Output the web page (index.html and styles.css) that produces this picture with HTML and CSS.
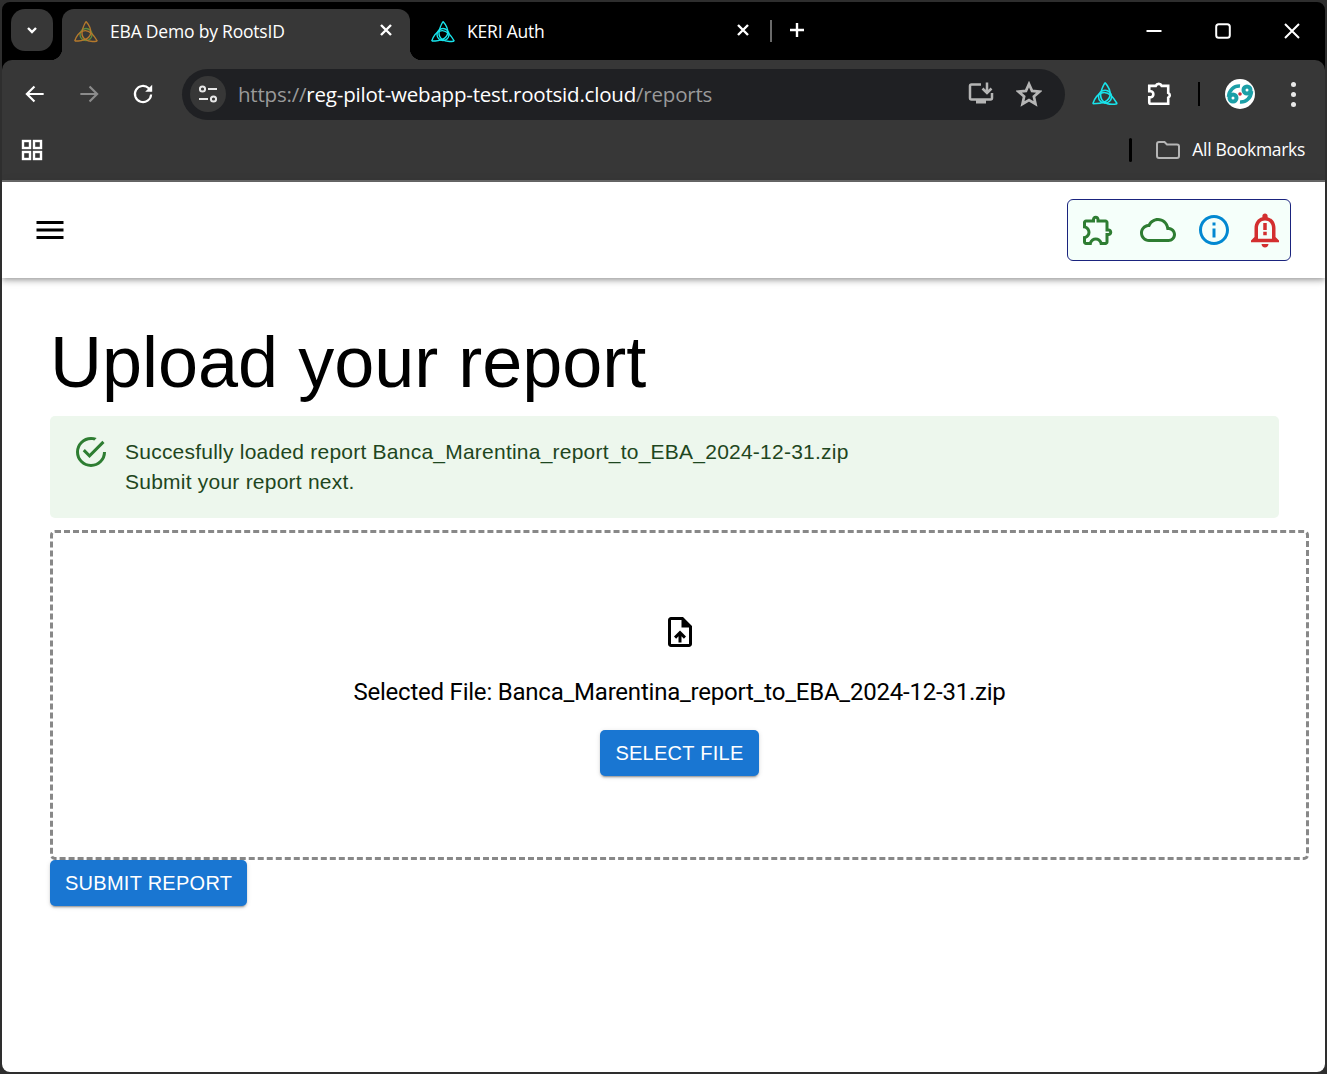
FILE: index.html
```html
<!DOCTYPE html>
<html lang="en">
<head>
  <meta charset="UTF-8">
  <title>EBA Demo by RootsID</title>
  <link rel="stylesheet" href="styles.css">
</head>
<body>
  <svg class="defs">
    <symbol id="knot" viewBox="0 0 24 24">
      <circle cx="12" cy="14.500" r="6" fill="none" stroke="var(--ring)" stroke-width="1.400"/>
      <g fill="none" stroke="currentColor" stroke-width="1.400">
        <path d="M12 1.500C17 7 23 21 .74 21"/>
        <path d="M12 1.500C17 7 23 21 .74 21" transform="rotate(120 12 14.500)"/>
        <path d="M12 1.500C17 7 23 21 .74 21" transform="rotate(240 12 14.500)"/>
      </g>
    </symbol>
  </svg>
  <div class="window">
    <!-- tab strip -->
    <div class="tabstrip">
      <div class="tab-search">
        <svg viewBox="0 0 16 16" width="16" height="16"><path d="M4 6l4 4 4-4" class="stroke-white thick"/></svg>
      </div>
      <div class="tab tab-active">
        <svg class="tab-logo knot-brown"><use href="#knot"/></svg>
        <span class="tab-title">EBA Demo by RootsID</span>
        <svg class="tab-close" viewBox="0 0 14 14"><path d="M2 2l10 10M12 2L2 12" class="stroke-white thick"/></svg>
      </div>
      <div class="tab tab-idle">
        <svg class="tab-logo knot-cyan"><use href="#knot"/></svg>
        <span class="tab-title">KERI Auth</span>
        <svg class="tab-close" viewBox="0 0 14 14"><path d="M2 2l10 10M12 2L2 12" class="stroke-white thick"/></svg>
      </div>
      <div class="tab-sep"></div>
      <svg class="tab-new" viewBox="0 0 16 16"><path d="M8 1v14M1 8h14" class="stroke-white thick"/></svg>
      <div class="win-controls">
        <svg viewBox="0 0 16 16"><path d="M0.5 8h15" class="stroke-white"/></svg>
        <svg viewBox="0 0 16 16"><rect x="1.200" y="1.200" width="13.600" height="13.600" rx="2.500" fill="none" class="stroke-white"/></svg>
        <svg viewBox="0 0 16 16"><path d="M1 1l14 14M15 1L1 15" class="stroke-white"/></svg>
      </div>
    </div>

    <!-- address bar -->
    <div class="toolbar">
      <div class="tool-btn">
        <svg viewBox="0 0 24 24"><path d="M20 12H5M11.500 5L4.500 12l7 7" class="stroke-white"/></svg>
      </div>
      <div class="tool-btn">
        <svg viewBox="0 0 24 24"><path d="M4 12h15M12.500 5l7 7-7 7" class="stroke-dim"/></svg>
      </div>
      <div class="tool-btn">
        <svg viewBox="0 0 24 24"><path d="M19.500 12.500a7.500 7.500 0 1 1-2.200-5.800L19.500 9" class="stroke-white"/><path d="M20.500 3.500v6.500h-6.500z" fill="#fff"/></svg>
      </div>
      <div class="omnibox">
        <div class="site-info">
          <svg viewBox="0 0 24 24" width="24" height="24">
            <circle cx="6.500" cy="7" r="2.600" fill="none" stroke="#e6e6e6" stroke-width="2"/>
            <path d="M12 7h9M3 17h9" stroke="#e6e6e6" stroke-width="2" fill="none"/>
            <circle cx="17.500" cy="17" r="2.600" fill="none" stroke="#e6e6e6" stroke-width="2"/>
          </svg>
        </div>
        <div class="url"><span class="url-dim">https://</span>reg-pilot-webapp-test.rootsid.cloud<span class="url-dim">/reports</span></div>
        <svg class="omni-icon omni-install" viewBox="0 0 26 26">
          <path d="M13 3.500H3.500A1.500 1.500 0 0 0 2 5v12a1.500 1.500 0 0 0 1.500 1.500h19A1.500 1.500 0 0 0 24 17v-5" class="stroke-grey heavy"/>
          <path d="M19 1.500v10M14.500 7.500l4.500 4.500 4.500-4.500" class="stroke-grey heavy"/>
          <path d="M8 19h10v3.500H8z" fill="#b5b5b5"/>
        </svg>
        <svg class="omni-icon omni-star" viewBox="0 0 24 24"><path d="M12 2.800l2.800 6.300 6.900.7-5.200 4.600 1.500 6.800-6-3.500-6 3.500 1.500-6.800-5.200-4.600 6.900-.7z" class="stroke-grey heavy"/></svg>
      </div>
      <svg class="ext-keri knot-cyan"><use href="#knot"/></svg>
      <svg class="ext-puzzle" viewBox="0 0 24 24"><path d="M3 4.500h6a3 3 0 0 1 5.500 0H20.500v6.500a2.400 2.400 0 0 1 0 4.400V21H4.500a1.500 1.500 0 0 1-1.500-1.500v-4.500h1.500a2.800 2.800 0 0 0 0-5.500H3z" class="stroke-white thick"/></svg>
      <div class="tool-sep"></div>
      <div class="avatar">
        <svg viewBox="0 0 30 30" width="30" height="30">
          <circle cx="15" cy="15" r="15" fill="#fff"/>
          <g fill="none" stroke="#1c9fa7">
            <circle cx="8" cy="19" r="3.500" stroke-width="4"/>
            <path d="M3.500 18C4 11 9 6.500 15 7" stroke-width="3.600"/>
          </g>
          <g fill="none" stroke="#1c9fa7" transform="rotate(180 15 15)">
            <circle cx="8" cy="19" r="3.500" stroke-width="4"/>
            <path d="M3.500 18C4 11 9 6.500 15 7" stroke-width="3.600"/>
          </g>
          <circle cx="15" cy="15" r="1.800" fill="#d0303a"/>
        </svg>
      </div>
      <div class="dots"><i></i><i></i><i></i></div>
    </div>

    <!-- bookmarks bar -->
    <div class="bookmarks">
      <svg class="apps" viewBox="0 0 22 22">
        <rect x="2" y="2" width="7" height="7" class="stroke-white thick"/>
        <rect x="13" y="2" width="7" height="7" class="stroke-white thick"/>
        <rect x="2" y="13" width="7" height="7" class="stroke-white thick"/>
        <rect x="13" y="13" width="7" height="7" class="stroke-white thick"/>
      </svg>
      <div class="bm-sep"></div>
      <svg class="folder" viewBox="0 0 24 18"><path d="M1 3a2 2 0 0 1 2-2h5.500l2.500 2.500h10a2 2 0 0 1 2 2V15a2 2 0 0 1-2 2H3a2 2 0 0 1-2-2z" class="stroke-grey"/></svg>
      <span class="bm-label">All Bookmarks</span>
    </div>

    <!-- page -->
    <div class="page">
      <header class="appbar">
        <svg class="menu-icon" viewBox="0 0 24 24"><path d="M3 18h18v-2H3v2zm0-5h18v-2H3v2zm0-7v2h18V6H3z"/></svg>
        <div class="status-box">
          <svg class="status-icon icon-puzzle" viewBox="0 0 24 24"><path d="M10.500 4.500c.28 0 .5.22.5.5v2h6v6h2c.28 0 .5.22.5.5s-.22.5-.5.5h-2v6h-2.120c-.68-1.750-2.390-3-4.380-3s-3.700 1.250-4.380 3H4v-2.120c1.750-.68 3-2.390 3-4.380 0-1.990-1.240-3.700-2.990-4.380L4 7h6V5c0-.28.22-.5.5-.5m0-2C9.120 2.500 8 3.620 8 5H4c-1.100 0-1.990.9-1.990 2v3.800h.29c1.490 0 2.700 1.210 2.700 2.700s-1.210 2.700-2.700 2.700H2V20c0 1.100.9 2 2 2h3.800v-.3c0-1.490 1.210-2.700 2.700-2.700 1.490 0 2.700 1.210 2.700 2.700v.3H17c1.100 0 2-.9 2-2v-4c1.380 0 2.500-1.120 2.500-2.500S20.380 11 19 11V7c0-1.100-.9-2-2-2h-4c0-1.380-1.120-2.500-2.500-2.500z"/></svg>
          <svg class="status-icon icon-cloud" viewBox="0 0 24 24"><path d="M19.350 10.040C18.670 6.590 15.640 4 12 4 9.110 4 6.600 5.640 5.350 8.040 2.340 8.360 0 10.910 0 14c0 3.310 2.690 6 6 6h13c2.760 0 5-2.240 5-5 0-2.640-2.050-4.780-4.650-4.960zM19 18H6c-2.210 0-4-1.790-4-4 0-2.050 1.530-3.760 3.560-3.970l1.070-.11.5-.95C8.080 7.140 9.940 6 12 6c2.620 0 4.880 1.860 5.390 4.430l.3 1.500 1.530.11c1.560.1 2.780 1.410 2.780 2.960 0 1.650-1.350 3-3 3z"/></svg>
          <svg class="status-icon icon-info" viewBox="0 0 24 24"><path d="M11 7h2v2h-2zm0 4h2v6h-2zm1-9C6.480 2 2 6.480 2 12s4.480 10 10 10 10-4.480 10-10S17.520 2 12 2zm0 18c-4.410 0-8-3.590-8-8s3.590-8 8-8 8 3.590 8 8-3.590 8-8 8z"/></svg>
          <svg class="status-icon icon-bell" viewBox="0 0 24 24"><path d="M12 22c1.100 0 2-.9 2-2h-4c0 1.100.9 2 2 2zm6-6v-5c0-3.070-1.630-5.640-4.500-6.320V4c0-.83-.67-1.500-1.500-1.500s-1.500.67-1.500 1.500v.68C7.640 5.360 6 7.920 6 11v5l-2 2v1h16v-1l-2-2zm-2 1H8v-6c0-2.480 1.510-4.500 4-4.500s4 2.020 4 4.500v6zM11 8h2v4h-2zm0 5h2v2h-2z"/></svg>
        </div>
      </header>

      <main class="content">
        <h1>Upload your report</h1>
        <div class="alert">
          <svg class="alert-icon" viewBox="0 0 24 24"><path d="M20 12a8 8 0 0 1-8 8 8 8 0 0 1-8-8 8 8 0 0 1 8-8c.76 0 1.500.11 2.200.31l1.570-1.570A9.800 9.800 0 0 0 12 2 10 10 0 0 0 2 12a10 10 0 0 0 10 10 10 10 0 0 0 10-10M7.910 10.080L6.500 11.500 11 16 21 6l-1.410-1.420L11 13.170z"/></svg>
          <div class="alert-text">
            <div>Succesfully loaded report Banca_Marentina_report_to_EBA_2024-12-31.zip</div>
            <div>Submit your report next.</div>
          </div>
        </div>
        <div class="dropzone">
          <svg class="upload-icon" viewBox="0 0 24 24"><path d="M14 2H6c-1.100 0-1.990.9-1.990 2L4 20c0 1.100.89 2 1.990 2H18c1.100 0 2-.9 2-2V8l-6-6zm4 18H6V4h7v5h5v11zM8 15.010l1.410 1.410L11 14.840V19h2v-4.160l1.590 1.590L16 15.010 12.010 11z"/></svg>
          <p class="selected">Selected File: Banca_Marentina_report_to_EBA_2024-12-31.zip</p>
          <button class="btn" type="button">Select File</button>
        </div>
        <button class="btn" type="button">Submit Report</button>
      </main>
    </div>
  </div>
</body>
</html>
```

FILE: styles.css
```css
* { box-sizing: border-box; }
html, body { margin: 0; padding: 0; }
body { width: 1327px; height: 1074px; background: #2e2e2e; overflow: hidden; font-family: "Liberation Sans", Arial, sans-serif; }
svg { display: block; flex: none; }
.defs { display: none; }

.stroke-white { fill: none; stroke: #fff; stroke-width: 2; }
.stroke-white.thick { stroke-width: 2.4; }
.stroke-dim { fill: none; stroke: #8b8b8b; stroke-width: 2; }
.stroke-grey { fill: none; stroke: #b5b5b5; stroke-width: 2; }
.stroke-grey.heavy { stroke-width: 2.5; }
.knot-brown { color: #b5792c; --ring: #5d8c3e; }
.knot-cyan { color: #18e4ec; --ring: #18e4ec; }

.window { width: 1327px; height: 1074px; border: 2px solid #2e2e2e; border-radius: 10px; overflow: hidden; display: flex; flex-direction: column; background: #000; }

/* tab strip */
.tabstrip { height: 58px; flex: none; display: flex; align-items: flex-start; padding: 7px 0 0 9px; color: #fff; font-family: "Open Sans", "Noto Sans", sans-serif; }
.tab-search { width: 42px; height: 42px; background: #373737; border-radius: 14px; display: flex; align-items: center; justify-content: center; margin-right: 9px; }
.tab { height: 51px; display: flex; align-items: center; position: relative; }
.tab-active { width: 348px; background: #373737; border-radius: 12px 12px 0 0; padding: 0 17px 0 12px; }
.tab-active::before, .tab-active::after { content: ""; position: absolute; bottom: 0; width: 12px; height: 12px; }
.tab-active::before { left: -12px; background: radial-gradient(circle at 0 0, #000 12px, #373737 12.5px); }
.tab-active::after { right: -12px; background: radial-gradient(circle at 100% 0, #000 12px, #373737 12.5px); }
.tab-idle { width: 348px; padding: 0 8px 0 21px; }
.tab-logo { width: 24px; height: 24px; margin-right: 12px; margin-top: -6px; }
.tab-title { font-size: 17.5px; letter-spacing: -.2px; flex: 1; margin-top: -8px; white-space: nowrap; }
.tab-close { width: 14px; height: 14px; margin-top: -10px; }
.tab-sep { width: 2px; height: 22px; background: #6a6a6a; margin: 11px 0 0 12px; }
.tab-new { width: 16px; height: 16px; margin: 13px 0 0 17px; }
.win-controls { margin-left: auto; display: flex; gap: 53px; padding: 14px 25px 0 0; }
.win-controls svg { width: 16px; height: 16px; }

/* toolbar */
.toolbar { height: 68px; flex: none; background: #373737; border-radius: 10px 10px 0 0; display: flex; align-items: center; padding: 0 0 0 6px; }
.tool-btn { width: 54px; height: 50px; display: flex; align-items: center; justify-content: center; }
.tool-btn svg { width: 26px; height: 26px; }
.omnibox { width: 883px; height: 51px; margin-left: 12px; background: #1f2023; border-radius: 26px; display: flex; align-items: center; padding: 0 23px 0 8px; }
.site-info { width: 36px; height: 36px; border-radius: 50%; background: #373737; display: flex; align-items: center; justify-content: center; margin-right: 12px; }
.url { flex: 1; color: #fff; font-family: "Open Sans", "Noto Sans", sans-serif; font-size: 20.5px; letter-spacing: -.2px; white-space: nowrap; }
.url-dim { color: #9a9a9a; }
.omni-icon { width: 26px; height: 26px; }
.omni-star { margin-left: 22px; }
.ext-keri { width: 26px; height: 26px; margin-left: 27px; }
.ext-puzzle { width: 26px; height: 26px; margin-left: 28px; }
.tool-sep { width: 2px; height: 24px; background: #000; margin-left: 26px; }
.avatar { width: 30px; height: 30px; margin-left: 25px; }
.dots { display: flex; flex-direction: column; gap: 5px; margin-left: 36px; }
.dots i { width: 5px; height: 5px; border-radius: 50%; background: #e8e8e8; }

/* bookmarks */
.bookmarks { height: 52px; flex: none; background: #373737; display: flex; align-items: center; padding: 0 20px 8px 19px; color: #fff; }
.apps { width: 22px; height: 22px; }
.bm-sep { width: 3px; height: 24px; background: #000; border-radius: 2px; margin-left: auto; }
.folder { width: 24px; height: 18px; margin-left: 24px; }
.bm-label { font-family: "Open Sans", "Noto Sans", sans-serif; font-size: 17.5px; letter-spacing: -.3px; margin-left: 12px; margin-top: -2px; }

/* page */
.page { flex: 1; background: #fff; border-top: 2px solid #6b6b6b; display: flex; flex-direction: column; min-height: 0; }
.appbar { height: 96px; flex: none; display: flex; align-items: center; justify-content: space-between; padding: 0 34px 0 30px; background: #fff; box-shadow: 0 2px 4px -1px rgba(0,0,0,.2), 0 4px 5px 0 rgba(0,0,0,.14), 0 1px 10px 0 rgba(0,0,0,.12); position: relative; }
.menu-icon { width: 36px; height: 36px; fill: #000; }
.status-box { width: 224px; height: 62px; background: #f5fffa; border: 1px solid #1a237e; border-radius: 6px; display: flex; align-items: center; padding-left: 12px; }
.status-icon { width: 36px; height: 36px; }
.icon-puzzle { fill: #2e7d32; }
.icon-cloud { fill: #2e7d32; margin-left: 24px; }
.icon-info { fill: #0288d1; margin-left: 20px; }
.icon-bell { fill: #d32f2f; width: 42px; height: 42px; margin-left: 12px; }

.content { padding: 0 0 0 48px; }
h1 { font-size: 72px; font-weight: 400; line-height: 84px; margin: 42px 0 12px; color: #000; }
.alert { width: 1229px; height: 102px; background: #edf7ed; color: #1e4620; border-radius: 5px; display: flex; padding: 21px 0 0 23px; font-size: 21px; letter-spacing: .23px; line-height: 30px; }
.alert-icon { width: 36px; height: 36px; fill: #2e7d32; margin: -3px 16px 0 0; }
.dropzone { width: 1259px; height: 330px; margin-top: 12px; border: 3px dashed #888; border-radius: 5px; display: flex; flex-direction: column; align-items: center; justify-content: center; }
.upload-icon { width: 36px; height: 36px; fill: #000; }
.selected { font-family: Roboto, sans-serif; font-size: 24px; letter-spacing: -.22px; line-height: 36px; margin: 24px 0 20px; color: #000; }
.btn { height: 46px; padding: 0 15px; border: none; border-radius: 5px; background: #1976d2; color: #fff; font-family: "Liberation Sans", Arial, sans-serif; font-size: 20px; letter-spacing: .27px; text-transform: uppercase; box-shadow: 0 3px 1px -2px rgba(0,0,0,.2), 0 2px 2px 0 rgba(0,0,0,.14), 0 1px 5px 0 rgba(0,0,0,.12); display: block; }
```
